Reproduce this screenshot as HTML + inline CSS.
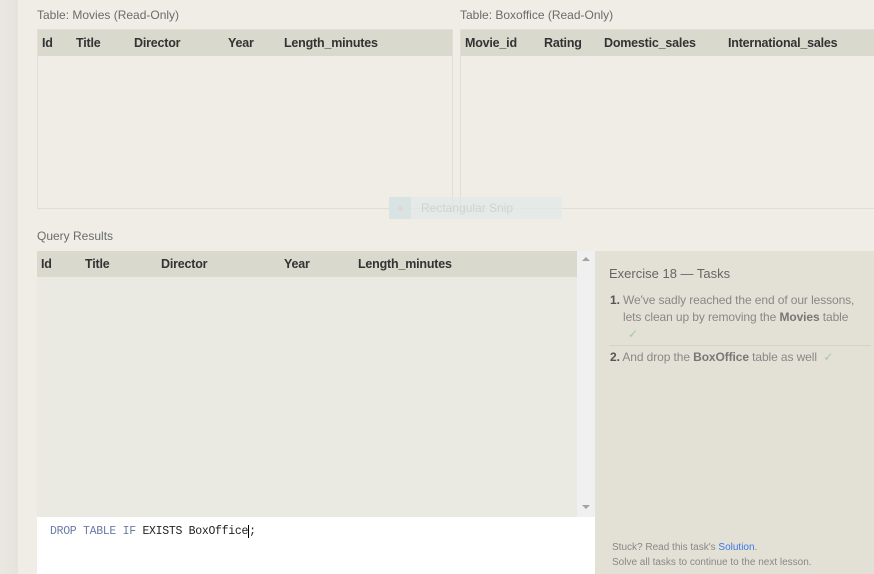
<!DOCTYPE html>
<html><head><style>
*{margin:0;padding:0;box-sizing:border-box}
body{width:874px;height:574px;overflow:hidden;background:#efede6;font-family:"Liberation Sans",sans-serif;position:relative}
.strip{position:absolute;left:0;top:0;width:18px;height:574px;background:linear-gradient(90deg,#ebe8e3,#e6e2dc)}
.lbl{position:absolute;font-size:12px;color:#6b6b6b}
.tbl{position:absolute;border:1px solid #e0ded6}
.hdr{position:absolute;left:0;top:0;right:0;height:26px;background:#d9d9ce}
.hdr span{position:absolute;top:6px;font-size:12.5px;font-weight:bold;color:#333;letter-spacing:-0.2px}
</style></head><body>
<div class="strip"></div>
<div class="lbl" style="left:37px;top:8px">Table: Movies (Read-Only)</div>
<div class="lbl" style="left:460px;top:8px">Table: Boxoffice (Read-Only)</div>
<div class="tbl" style="left:37px;top:29px;width:416px;height:180px">
 <div class="hdr"><span style="left:4px">Id</span><span style="left:38px">Title</span><span style="left:96px">Director</span><span style="left:190px">Year</span><span style="left:246px">Length_minutes</span></div>
</div>
<div class="tbl" style="left:460px;top:29px;width:420px;height:180px">
 <div class="hdr"><span style="left:4px">Movie_id</span><span style="left:83px">Rating</span><span style="left:143px">Domestic_sales</span><span style="left:267px">International_sales</span></div>
</div>
<div style="position:absolute;left:389px;top:197px;width:173px;height:22px;background:rgba(225,232,232,0.7)">
 <div style="position:absolute;left:0;top:0;width:22px;height:22px;background:rgba(215,225,225,0.8)"></div>
 <div style="position:absolute;left:9px;top:9px;width:5px;height:5px;border-radius:50%;background:#e0d8cf"></div>
 <span style="position:absolute;left:32px;top:4px;font-size:12px;color:#cfd2d0">Rectangular Snip</span>
</div>
<div class="lbl" style="left:37px;top:229px">Query Results</div>
<div style="position:absolute;left:37px;top:251px;width:540px;height:266px;background:#eaeae3">
 <div class="hdr"><span style="left:4px">Id</span><span style="left:48px">Title</span><span style="left:124px">Director</span><span style="left:247px">Year</span><span style="left:321px">Length_minutes</span></div>
</div>
<div style="position:absolute;left:577px;top:251px;width:18px;height:266px;background:#f0f0f0">
 <div style="position:absolute;left:5px;top:6px;border:4px solid transparent;border-bottom:4px solid #a3a3a3;border-top:0"></div>
 <div style="position:absolute;left:5px;top:254px;border:4px solid transparent;border-top:4px solid #a3a3a3;border-bottom:0"></div>
</div>
<div style="position:absolute;left:37px;top:517px;width:558px;height:57px;background:#fff;font-family:'Liberation Mono',monospace;font-size:11.5px;letter-spacing:-0.3px">
 <div style="position:absolute;left:13px;top:8px"><span style="color:#6b7ba8">DROP TABLE IF</span> <span style="color:#222">EXISTS BoxOffice</span><span style="border-left:1px solid #000;color:#222">;</span></div>
</div>
<div style="position:absolute;left:595px;top:251px;width:279px;height:323px;background:#e3e0d5;color:#888">
 <div style="position:absolute;left:14px;top:15px;font-size:13px;color:#666">Exercise 18 — Tasks</div>
 <div style="position:absolute;left:15px;top:41px;width:260px;font-size:12px;line-height:17px;letter-spacing:-0.1px"><b style="color:#555">1.</b> We've sadly reached the end of our lessons,<br><span style="padding-left:13px">lets clean up by removing the <b style="color:#777">Movies</b> table</span><br><span style="padding-left:18px;color:#a8c8a8">✓</span></div>
 <div style="position:absolute;left:14px;top:94px;width:262px;border-top:1px solid #d5d2c6"></div>
 <div style="position:absolute;left:15px;top:99px;font-size:12px;letter-spacing:-0.1px"><b style="color:#555">2.</b> And drop the <b style="color:#777">BoxOffice</b> table as well &nbsp;<span style="color:#a8c8a8">✓</span></div>
 <div style="position:absolute;left:17px;top:289px;font-size:10px;line-height:15px;color:#888">Stuck? Read this task's <span style="color:#3b78e7">Solution</span>.<br>Solve all tasks to continue to the next lesson.</div>
</div>
</body></html>
